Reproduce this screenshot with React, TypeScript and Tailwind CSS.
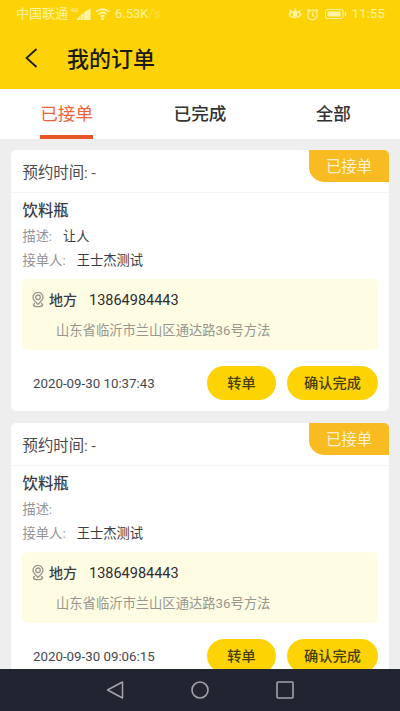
interface Order {
  id: number;
  desc: string;
  receiver: string;
  phone: string;
  address: string;
  time: string;
}

const orders: Order[] = [
  { id: 1, desc: "让人", receiver: "王士杰测试", phone: "13864984443", address: "山东省临沂市兰山区通达路36号方法", time: "2020-09-30 10:37:43" },
  { id: 2, desc: "", receiver: "王士杰测试", phone: "13864984443", address: "山东省临沂市兰山区通达路36号方法", time: "2020-09-30 09:06:15" },
];

function StatusBar() {
  return (
    <div className="flex h-7 items-center pl-4 pr-[15px] text-[12px] text-[#fff3a0]">
      <span className="w-[53px] whitespace-nowrap text-[13px]">中国联通</span>
      <span className="mb-2 ml-0.5 w-[7px] text-[6px] leading-none">4G</span>
      <svg className="-ml-px mr-[4px]" width="14" height="12" viewBox="0 0 14 12" fill="currentColor">
        <path d="M0 12v-1.500l3-2.500v4zM3.500 12V7.500l3-2.500v7zM7 12V4.500L13.500 0v12z" />
      </svg>
      <svg width="15" height="12" viewBox="0 0 14 12" fill="none" stroke="currentColor" strokeWidth="1.800">
        <path d="M.7 3.700C4.300.4 9.700.4 13.300 3.700M3 6.200c2.300-2 5.700-2 8 0M5 8.600c1.200-1 2.800-1 4 0" />
        <circle cx="7" cy="10.800" r=".7" fill="currentColor" />
      </svg>
      <span className="ml-[5px] text-[13px]">6.53K<span className="opacity-35">/s</span></span>
      <svg className="ml-auto mr-1" width="14" height="12" viewBox="0 0 14 12" fill="none" stroke="currentColor" strokeWidth="1.400">
        <path d="M1 6.500c2.500-4 9.500-4 12 0-2.500 4-9.500 4-12 0zM3 3.500 1.800 2M7 2.500V.5M11 3.500 12.200 2" />
        <circle cx="7" cy="6.300" r="1.700" fill="currentColor" />
      </svg>
      <svg className="mr-1.5" width="13" height="13" viewBox="0 0 13 13" fill="none" stroke="currentColor" strokeWidth="1.300">
        <circle cx="6.500" cy="7" r="4.800" />
        <path d="M6.500 4.200V7l2 1.700M.8 3.200 3.500.9M12.200 3.200 9.500.9" />
      </svg>
      <svg className="mr-1" width="23" height="10" viewBox="0 0 23 10" fill="none" stroke="currentColor">
        <rect x=".5" y=".5" width="17.500" height="9" rx="1.500" />
        <path d="M2.500 2.500h13v5h-13z" fill="currentColor" stroke="none" />
        <path d="M20.500 3v4" strokeWidth="1.500" />
      </svg>
      <span className="text-[13px] tracking-[0.2px]">11:55</span>
    </div>
  );
}

function PinIcon() {
  return (
    <svg className="mr-[5px] shrink-0" width="12" height="16" viewBox="0 0 12 16" fill="none" stroke="#96958c" strokeWidth="1.300">
      <path d="M6 12.300C3.300 9.700 1 7.800 1 5.400a5 5 0 0 1 10 0c0 2.400-2.300 4.300-5 6.900z" />
      <circle cx="6" cy="5.300" r="2.300" />
      <path d="M3 11.300c-2.500.9-2.400 3.400 3 3.400s5.500-2.500 3-3.400" />
    </svg>
  );
}

function OrderCard({ order }: { order: Order }) {
  return (
    <div className="relative h-[261px] shrink-0 rounded-[5px] bg-white px-[11px] text-[#3c3d42]">
      <div className="absolute right-0 top-0 flex h-8 w-20 items-center justify-center rounded-bl-[15px] rounded-tr-[5px] bg-[#f9bb22] pt-1 text-[15.400px] text-[#fff3d0]">
        已接单
      </div>
      <div className="-mx-[11px] flex h-[43px] items-center border-b border-[#f5f5f5] pl-[11.500px] pt-[5px] text-[15.400px] text-[#4a4b51]">
        预约时间: -
      </div>
      <div className="flex h-[33px] items-center pl-[0.500px] pt-1 text-[15.400px] font-medium">饮料瓶</div>
      <div className="flex h-[19px] items-center pl-[0.500px] pt-0.5 text-[13.200px]">
        <span className="mr-[11px] text-[#929398]">描述:</span>{order.desc}
      </div>
      <div className="flex h-[29px] items-center pl-[0.500px] pt-0.5 text-[13.300px]">
        <span className="mr-[11px] text-[#929398]">接单人:</span>{order.receiver}
      </div>
      <div className="mt-[5px] h-[71px] rounded-[5px] bg-[#fffce4] pl-[10px] pt-[10px]">
        <div className="flex h-[21px] items-center text-[14px] font-medium">
          <PinIcon />
          <span className="mr-3 pt-0.5">地方</span>
          <span className="pt-0.5 text-[14.500px] font-normal text-[#2c2d30]">{order.phone}</span>
        </div>
        <div className="mt-[11px] pl-6 text-[13.300px] leading-5 text-[#97968f]">{order.address}</div>
      </div>
      <div className="mt-4 flex h-[34px] items-center pl-[11px]">
        <span className="pt-0.5 text-[13.300px] text-[#46474d]">{order.time}</span>
        <button className="ml-auto h-[34px] w-[69px] rounded-full bg-[#fdd303] pt-0.5 text-[14.200px] font-medium text-[#45400d]">转单</button>
        <button className="ml-[11px] h-[34px] w-[91px] rounded-full bg-[#fdd303] pt-0.5 text-[14.200px] font-medium text-[#45400d]">确认完成</button>
      </div>
    </div>
  );
}

export default function App() {
  return (
    <div className="flex h-[711px] w-[400px] flex-col overflow-hidden bg-[#eeeeee] font-[Roboto,'Noto_Sans_CJK_SC',sans-serif]">
      <header className="h-[89px] shrink-0 bg-[#fdd307]">
        <StatusBar />
        <div className="flex h-[61px] items-center pl-[25px] text-[#1b1a10]">
          <svg className="-mt-0.5" width="13" height="20" viewBox="0 0 13 20" fill="none" stroke="currentColor" strokeWidth="1.700">
            <path d="M11.500 1 1.500 10l10 9" />
          </svg>
          <h1 className="ml-[29px] pt-0.5 text-[22px] font-medium">我的订单</h1>
        </div>
      </header>
      <nav className="grid h-[50px] shrink-0 grid-cols-3 bg-white text-[17.600px] font-medium text-[#333]">
        <div className="flex justify-center">
          <span className="flex items-center border-b-4 border-[#ea5526] pt-1 font-normal text-[#ec6438]">已接单</span>
        </div>
        <div className="flex items-center justify-center">已完成</div>
        <div className="flex items-center justify-center">全部</div>
      </nav>
      <main className="flex h-[530px] flex-col gap-3 overflow-hidden px-[11px] pt-[11px]">
        {orders.map((o) => <OrderCard key={o.id} order={o} />)}
      </main>
      <footer className="flex h-[42px] shrink-0 items-center justify-center gap-[67px] bg-[#222531] text-[#a3a4aa]">
        <svg width="18" height="20" viewBox="0 0 18 20" fill="none" stroke="currentColor" strokeWidth="1.500">
          <path d="M16.500 2v16L1.500 10z" strokeLinejoin="round" />
        </svg>
        <svg width="18" height="18" viewBox="0 0 18 18" fill="none" stroke="currentColor" strokeWidth="1.600">
          <circle cx="9" cy="9" r="8" />
        </svg>
        <svg width="18" height="18" viewBox="0 0 18 18" fill="none" stroke="currentColor" strokeWidth="1.600">
          <rect x="1" y="1" width="16" height="16" rx="1" />
        </svg>
      </footer>
    </div>
  );
}
